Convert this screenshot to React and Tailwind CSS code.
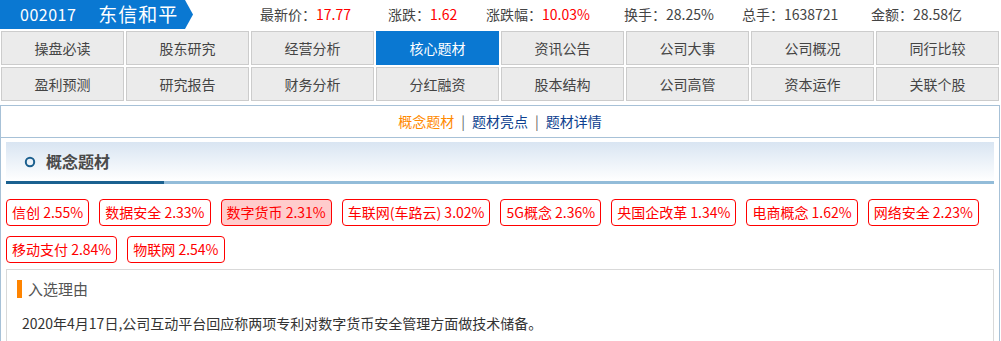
import React from "react";

const stats = [
  { label: "最新价：", value: "17.77", red: true, w: "w-[128px]" },
  { label: "涨跌：", value: "1.62", red: true, w: "w-[98px]" },
  { label: "涨跌幅：", value: "10.03%", red: true, w: "w-[138px]" },
  { label: "换手：", value: "28.25%", red: false, w: "w-[118px]" },
  { label: "总手：", value: "1638721", red: false, w: "w-[129px]" },
  { label: "金额：", value: "28.58亿", red: false, w: "w-[120px]" },
];

const tabs = [
  "操盘必读", "股东研究", "经营分析", "核心题材", "资讯公告", "公司大事", "公司概况", "同行比较",
  "盈利预测", "研究报告", "财务分析", "分红融资", "股本结构", "公司高管", "资本运作", "关联个股",
];

const concepts = [
  { name: "信创", pct: "2.55%" },
  { name: "数据安全", pct: "2.33%" },
  { name: "数字货币", pct: "2.31%", active: true },
  { name: "车联网(车路云)", pct: "3.02%" },
  { name: "5G概念", pct: "2.36%" },
  { name: "央国企改革", pct: "1.34%" },
  { name: "电商概念", pct: "1.62%" },
  { name: "网络安全", pct: "2.23%" },
  { name: "移动支付", pct: "2.84%" },
  { name: "物联网", pct: "2.54%" },
];

function StockHeader() {
  return (
    <div className="flex h-[29px] items-center">
      <div className="flex h-full">
        <div className="flex h-full w-[185px] items-center bg-[#0a78d2] pl-[20px] text-white">
          <span className="text-[16px] tracking-[0.5px]">002017</span>
          <span className="ml-[22px] text-[19px] tracking-[1px]">东信和平</span>
        </div>
        <svg width="8" height="29" viewBox="0 0 8 29">
          <polygon points="0,0 8,14.5 0,29" fill="#0a78d2" />
        </svg>
      </div>
      <div className="ml-[67px] flex text-[14px] text-[#444]">
        {stats.map((s) => (
          <span key={s.label} className={s.w}>
            {s.label}
            <span className={s.red ? "text-[#ff0000]" : "text-[#444]"}>{s.value}</span>
          </span>
        ))}
      </div>
    </div>
  );
}

function TabGrid() {
  return (
    <div className="mt-[2px] grid w-[999px] grid-cols-8 gap-[2px] pl-[1px]">
      {tabs.map((t) => {
        const active = t === "核心题材";
        return (
          <div
            key={t}
            className={`flex h-[34px] items-center justify-center border text-[14px] ${
              active
                ? "border-[#0a78d2] bg-[#0a78d2] text-white"
                : "border-[#cccccc] bg-[#ebebeb] text-[#444]"
            }`}
          >
            {t}
          </div>
        );
      })}
    </div>
  );
}

function SubNav() {
  return (
    <div className="flex h-[32px] items-center justify-center border-b border-[#a7c1d7] text-[14px]">
      <span className="text-[#ff8a00]">概念题材</span>
      <span className="mx-[7px] text-[#666]">|</span>
      <span className="text-[#0d3f8f]">题材亮点</span>
      <span className="mx-[7px] text-[#666]">|</span>
      <span className="text-[#0d3f8f]">题材详情</span>
    </div>
  );
}

function SectionTitle() {
  return (
    <div className="mx-[5px] mt-[4px]">
      <div className="flex h-[39px] items-center bg-gradient-to-b from-[#d9e5f2] to-white pl-[18px]">
        <svg width="12" height="12" viewBox="0 0 12 12">
          <circle cx="6" cy="6" r="4.2" fill="none" stroke="#1b5f8e" strokeWidth="2" />
        </svg>
        <span className="ml-[10px] text-[16px] font-bold text-[#4a4a4a]">概念题材</span>
      </div>
      <div className="flex h-[3px]">
        <div className="w-[158px] bg-[#1b6190]" />
        <div className="flex-1 bg-[#93bcd9]" />
      </div>
    </div>
  );
}

function ConceptTags() {
  return (
    <div className="mx-[5px] mt-[15px] flex flex-wrap gap-[10px]">
      {concepts.map((c) => (
        <span
          key={c.name}
          className={`flex h-[27px] items-center rounded-[4px] border border-[#ff0000] px-[5px] text-[14px] text-[#ff0000] ${
            c.active ? "bg-[#ffcccc]" : "bg-white"
          }`}
        >
          {c.name} {c.pct}
        </span>
      ))}
    </div>
  );
}

function ReasonBox() {
  return (
    <div className="mx-[5px] mt-[6px] border border-[#d9d9d9] pb-[20px]">
      <div className="mt-[10px] ml-[10px] flex items-center">
        <div className="h-[18px] w-[5px] bg-[#ff8400]" />
        <span className="ml-[6px] text-[15px] text-[#555]">入选理由</span>
      </div>
      <p className="mt-[17px] ml-[15px] text-[14px] text-[#333]">
        2020年4月17日,公司互动平台回应称两项专利对数字货币安全管理方面做技术储备。
      </p>
    </div>
  );
}

export default function App() {
  return (
    <div className="min-h-[341px] w-[1001px] bg-white font-['Noto_Sans_CJK_SC',sans-serif] leading-[1.2]">
      <StockHeader />
      <TabGrid />
      <div className="mt-[4px] w-[1000px] border border-[#a7c1d7]">
        <SubNav />
        <SectionTitle />
        <ConceptTags />
        <ReasonBox />
      </div>
    </div>
  );
}
